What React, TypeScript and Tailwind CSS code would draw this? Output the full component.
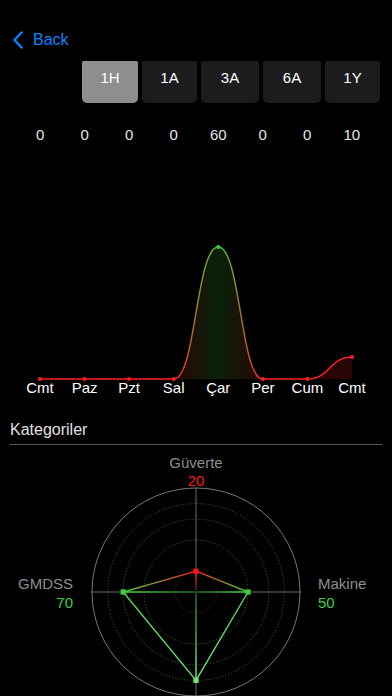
import React from "react";

const RED = "#ff1f1f";
const GREEN = "#3bd13b";
const LIGHT = "#6fe36f";

const xs = Array.from({ length: 8 }, (_, i) => 40 + i * 44.57);
const vals = [0, 0, 0, 0, 60, 0, 0, 10];
const days = ["Cmt", "Paz", "Pzt", "Sal", "Çar", "Per", "Cum", "Cmt"];
const BASE = 234;
const K = 2.2;

function LineChart() {
  const pts = xs.map((x, i) => [x, BASE - vals[i] * K]);
  let d = `M${pts[0][0]},${pts[0][1]}`;
  for (let i = 1; i < pts.length; i++) {
    const [x0, y0] = pts[i - 1];
    const [x1, y1] = pts[i];
    const m = (x0 + x1) / 2;
    d += ` C${m},${y0} ${m},${y1} ${x1},${y1}`;
  }
  const fill = `${d} L${xs[7]},${BASE} L${xs[0]},${BASE} Z`;
  const col = (v: number) => (v >= 30 ? GREEN : RED);
  return (
    <svg width="392" height="255" viewBox="0 0 392 255" className="block">
      <defs>
        <linearGradient id="lg" gradientUnits="userSpaceOnUse" x1={xs[0]} y1="0" x2={xs[7]} y2="0">
          {xs.map((x, i) => (
            <stop key={i} offset={(x - xs[0]) / (xs[7] - xs[0])} stopColor={col(vals[i])} />
          ))}
        </linearGradient>
      </defs>
      <path d={fill} fill="url(#lg)" opacity="0.16" />
      <path d={d} fill="none" stroke="url(#lg)" strokeWidth="1.5" />
      {pts.map(([x, y], i) => (
        <circle key={i} cx={x} cy={y} r="2" fill={col(vals[i])} />
      ))}
      {days.map((t, i) => (
        <text key={i} x={xs[i]} y="247.5" textAnchor="middle" fill="#ffffff" fontSize="15">
          {t}
        </text>
      ))}
    </svg>
  );
}

function Radar() {
  const cx = 196;
  const cy = 147;
  const s = 1.04;
  const top = [cx, cy - 20 * s];
  const right = [cx + 50 * s, cy];
  const bottom = [cx, cy + 85 * s];
  const left = [cx - 70 * s, cy];
  const edge = (id: string, a: number[], b: number[], c1: string, c2: string) => (
    <g key={id}>
      <defs>
        <linearGradient id={id} gradientUnits="userSpaceOnUse" x1={a[0]} y1={a[1]} x2={b[0]} y2={b[1]}>
          <stop offset="0" stopColor={c1} />
          <stop offset="1" stopColor={c2} />
        </linearGradient>
      </defs>
      <line x1={a[0]} y1={a[1]} x2={b[0]} y2={b[1]} stroke={`url(#${id})`} strokeWidth="1.4" />
    </g>
  );
  const sq = (p: number[], c: string) => (
    <rect x={p[0] - 2.6} y={p[1] - 2.6} width="5.2" height="5.2" fill={c} />
  );
  return (
    <svg width="392" height="251" viewBox="0 0 392 251" className="block">
      <circle cx={cx} cy={cy} r={104} fill="none" stroke="#7a7a7a" strokeWidth="1" />
      <circle cx={cx} cy={cy} r={88.4} fill="none" stroke="#2a7a2a" strokeWidth="1" strokeDasharray="1 2" />
      <circle cx={cx} cy={cy} r={72.8} fill="none" stroke="#2a7a2a" strokeWidth="1" strokeDasharray="1 2" />
      <circle cx={cx} cy={cy} r={52} fill="none" stroke="#2a7a2a" strokeWidth="1" strokeDasharray="1 2" />
      <circle cx={cx} cy={cy} r={20.8} fill="none" stroke="#8a1a1a" strokeWidth="1" strokeDasharray="1 2" />
      <line x1={cx - 104} y1={cy} x2={cx + 104} y2={cy} stroke="#6a6a6a" strokeWidth="1" />
      <line x1={cx} y1={cy - 104} x2={cx} y2={251} stroke="#6a6a6a" strokeWidth="1" />
      {edge("s1", [cx, cy], top, "#300000", "#ff2020")}
      {edge("s2", [cx, cy], right, "#155015", GREEN)}
      {edge("s3", [cx, cy], bottom, "#155015", LIGHT)}
      {edge("s4", [cx, cy], left, "#155015", GREEN)}
      {edge("e1", top, right, RED, GREEN)}
      {edge("e2", right, bottom, "#55d855", LIGHT)}
      {edge("e3", bottom, left, LIGHT, "#55d855")}
      {edge("e4", left, top, GREEN, RED)}
      {sq(top, "#ff1010")}
      {sq(right, GREEN)}
      {sq(bottom, LIGHT)}
      {sq(left, GREEN)}
      <text x={cx} y="22.5" textAnchor="middle" fill="#8e8e8e" fontSize="15">Güverte</text>
      <text x={cx} y="40.5" textAnchor="middle" fill="#ff1a1a" fontSize="15" fontWeight="500">20</text>
      <text x="73" y="143.5" textAnchor="end" fill="#8e8e8e" fontSize="15">GMDSS</text>
      <text x="73" y="162.5" textAnchor="end" fill={GREEN} fontSize="15" fontWeight="500">70</text>
      <text x="318" y="143.5" textAnchor="start" fill="#8e8e8e" fontSize="15">Makine</text>
      <text x="318" y="162.5" textAnchor="start" fill={GREEN} fontSize="15" fontWeight="500">50</text>
    </svg>
  );
}

export default function App() {
  const segs = ["1H", "1A", "3A", "6A", "1Y"];
  return (
    <div className="w-[392px] h-[696px] overflow-hidden bg-black text-white font-['Liberation_Sans',Arial,sans-serif]">
      <div className="pt-[28px] h-[52px] flex items-center pl-[12px]">
        <div className="flex items-center gap-[9px] text-[#0a84ff]">
          <svg width="12" height="18" viewBox="0 0 12 18">
            <path d="M9.5 1.5 L2.5 9 L9.5 16.5" fill="none" stroke="#0a84ff" strokeWidth="2.4" strokeLinecap="round" strokeLinejoin="round" />
          </svg>
          <span className="text-[16px] leading-[20px]">Back</span>
        </div>
      </div>
      <div className="mt-[9px] flex pl-[82px] gap-[4px]">
        {segs.map((s, i) => (
          <div
            key={s}
            className={`${i === 0 ? "bg-[#8e8e8e] w-[56px]" : "bg-[#1c1c1e] w-[55px]"} ${i === 2 || i === 3 ? "w-[58px]" : ""} h-[42px] rounded-b-[5px] rounded-t-[2px] flex justify-center pt-[8px] text-[15px] leading-[18px] text-white`}
          >
            {s}
          </div>
        ))}
      </div>
      <div className="mt-[22px] h-[20px] px-[18px] grid grid-cols-8 text-[15px] leading-[20px] text-[#e6e6e6]">
        {vals.map((v, i) => (
          <div key={i} className="text-center">{v}</div>
        ))}
      </div>
      <LineChart />
      <div className="mt-[20px] px-[10px] text-[16px] leading-[20px] text-[#e0e0e0]">Kategoriler</div>
      <div className="mt-[4px] mx-[10px] h-px bg-[#5a5a5a]" />
      <Radar />
    </div>
  );
}
